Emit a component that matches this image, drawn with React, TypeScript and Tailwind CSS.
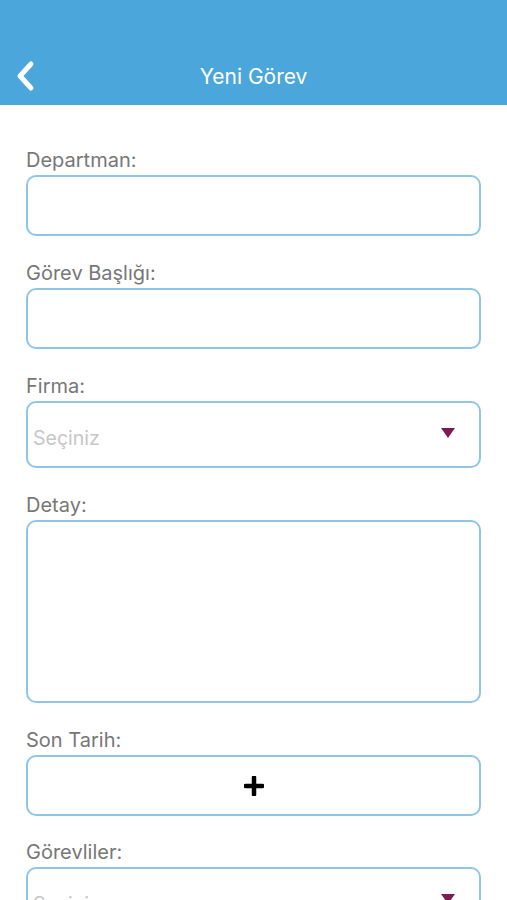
import React from 'react'

const font = { fontFamily: 'Inter, "Noto Sans", sans-serif' }

function Label({ children }: { children: React.ReactNode }) {
  return <div className="mb-[3px] h-[24px] text-[20px] leading-[24px] text-[#777777]">{children}</div>
}

function Select() {
  return (
    <div className="flex h-[67px] items-center justify-between rounded-[10px] border-2 border-[#8fc6e6] pl-[5px] pr-[24px]">
      <span className="pt-[9px] text-[19.5px] text-[#c6c6c6]">Seçiniz</span>
      <svg width="14" height="10" viewBox="0 0 14 10" className="mb-[3px]">
        <path d="M0 0 H14 L7 10 Z" fill="#7d1c52" />
      </svg>
    </div>
  )
}

export default function App() {
  return (
    <div className="min-h-screen bg-white" style={font}>
      {/* Header */}
      <header className="relative flex h-[105px] items-end justify-center bg-[#4ba6db] pb-[15px]">
        <button className="absolute left-[14px] top-[60px] p-0">
          <svg width="24" height="32" viewBox="0 0 24 32">
            <path d="M17 4 L6 16 L17 28" fill="none" stroke="white" strokeWidth="5" strokeLinecap="round" strokeLinejoin="round" />
          </svg>
        </button>
        <h1 className="text-[21px] leading-[26px] text-white">Yeni Görev</h1>
      </header>

      {/* Form */}
      <main className="px-[26px] pt-[43px]">
        <Label>Departman:</Label>
        <div className="h-[61px] rounded-[10px] border-2 border-[#8fc6e6]" />

        <div className="mt-[25px]">
          <Label>Görev Başlığı:</Label>
          <div className="h-[61px] rounded-[10px] border-2 border-[#8fc6e6]" />
        </div>

        <div className="mt-[25px]">
          <Label>Firma:</Label>
          <Select />
        </div>

        <div className="mt-[25px]">
          <Label>Detay:</Label>
          <div className="h-[183px] rounded-[10px] border-2 border-[#8fc6e6]" />
        </div>

        <div className="mt-[25px]">
          <Label>Son Tarih:</Label>
          <div className="flex h-[61px] items-center justify-center rounded-[10px] border-2 border-[#8fc6e6]">
            <svg width="20" height="20" viewBox="0 0 20 20">
              <path d="M10 1.5 V18.5 M1.5 10 H18.5" stroke="black" strokeWidth="4.5" strokeLinecap="round" />
            </svg>
          </div>
        </div>

        <div className="mt-[24px] pb-10">
          <Label>Görevliler:</Label>
          <Select />
        </div>
      </main>
    </div>
  )
}
